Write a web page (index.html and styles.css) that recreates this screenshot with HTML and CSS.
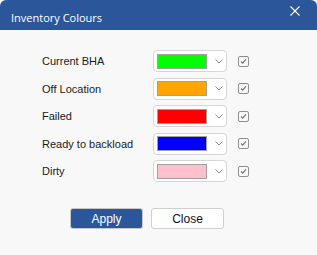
FILE: index.html
```html
<!DOCTYPE html>
<html lang="en">
<head>
  <meta charset="UTF-8">
  <meta name="viewport" content="width=device-width, initial-scale=1.0">
  <title>Inventory Colours</title>
  <link rel="stylesheet" href="styles.css">
</head>
<body>
  <div class="dialog">
    <div class="title-bar">
      <span class="title">Inventory Colours</span>
      <svg class="close-icon" viewBox="0 0 10 10" fill="none" stroke="currentColor" stroke-width="1.1">
        <path d="M0.5 0.5L9.5 9.5" />
        <path d="M9.5 0.5L0.5 9.5" />
      </svg>
    </div>

    <div class="content">
      <div class="rows">
        <div class="row">
          <span class="label">Current BHA</span>
          <div class="colour-select">
            <span class="swatch swatch-green"></span>
            <svg class="chevron" viewBox="0 0 8 5" fill="none" stroke="currentColor" stroke-width="1"><path d="M0.5 0.5L4 4L7.5 0.5" /></svg>
          </div>
          <span class="check"><svg viewBox="0 0 11 11" fill="none" stroke="currentColor" stroke-width="1.3"><path d="M2.5 5.5L4.5 7.5L8.5 3" /></svg></span>
        </div>
        <div class="row">
          <span class="label">Off Location</span>
          <div class="colour-select">
            <span class="swatch swatch-orange"></span>
            <svg class="chevron" viewBox="0 0 8 5" fill="none" stroke="currentColor" stroke-width="1"><path d="M0.5 0.5L4 4L7.5 0.5" /></svg>
          </div>
          <span class="check"><svg viewBox="0 0 11 11" fill="none" stroke="currentColor" stroke-width="1.3"><path d="M2.5 5.5L4.5 7.5L8.5 3" /></svg></span>
        </div>
        <div class="row">
          <span class="label">Failed</span>
          <div class="colour-select">
            <span class="swatch swatch-red"></span>
            <svg class="chevron" viewBox="0 0 8 5" fill="none" stroke="currentColor" stroke-width="1"><path d="M0.5 0.5L4 4L7.5 0.5" /></svg>
          </div>
          <span class="check"><svg viewBox="0 0 11 11" fill="none" stroke="currentColor" stroke-width="1.3"><path d="M2.5 5.5L4.5 7.5L8.5 3" /></svg></span>
        </div>
        <div class="row">
          <span class="label">Ready to backload</span>
          <div class="colour-select">
            <span class="swatch swatch-blue"></span>
            <svg class="chevron" viewBox="0 0 8 5" fill="none" stroke="currentColor" stroke-width="1"><path d="M0.5 0.5L4 4L7.5 0.5" /></svg>
          </div>
          <span class="check"><svg viewBox="0 0 11 11" fill="none" stroke="currentColor" stroke-width="1.3"><path d="M2.5 5.5L4.5 7.5L8.5 3" /></svg></span>
        </div>
        <div class="row">
          <span class="label">Dirty</span>
          <div class="colour-select">
            <span class="swatch swatch-pink"></span>
            <svg class="chevron" viewBox="0 0 8 5" fill="none" stroke="currentColor" stroke-width="1"><path d="M0.5 0.5L4 4L7.5 0.5" /></svg>
          </div>
          <span class="check"><svg viewBox="0 0 11 11" fill="none" stroke="currentColor" stroke-width="1.3"><path d="M2.5 5.5L4.5 7.5L8.5 3" /></svg></span>
        </div>
      </div>

      <div class="buttons">
        <button class="btn btn-primary">Apply</button>
        <button class="btn">Close</button>
      </div>
    </div>
  </div>
</body>
</html>
```

FILE: styles.css
```css
:root {
	--title-blue: #2b579a;
	--panel-bg: #f8f8f8;
	--border-light: #d6d6d6;
}

body {
	margin: 0;
	background: #ffffff;
	font-family: "Liberation Sans", Arial, sans-serif;
}

.dialog {
	width: 317px;
	height: 255px;
	background: var(--panel-bg);
	border-radius: 6px 6px 0 0;
	overflow: hidden;
	display: flex;
	flex-direction: column;
}

.title-bar {
	height: 30px;
	background: var(--title-blue);
	color: #ffffff;
	display: flex;
	align-items: center;
	justify-content: space-between;
	padding: 0 17px 0 11px;
}

.title {
	font-family: "Open Sans", sans-serif;
	font-size: 11px;
	padding-top: 5px;
}

.close-icon {
	width: 10px;
	height: 10px;
	margin-top: -8px;
}

.content {
	padding: 20px 0 0 42px;
}

.rows {
	display: flex;
	flex-direction: column;
	gap: 5.5px;
}

.row {
	display: flex;
	align-items: center;
	height: 22px;
}

.label {
	width: 111px;
	font-size: 11px;
	color: #1a1a1a;
}

.colour-select {
	box-sizing: border-box;
	width: 74px;
	height: 22px;
	background: #ffffff;
	border: 1px solid var(--border-light);
	border-radius: 4px;
	display: flex;
	align-items: center;
	padding-left: 3px;
}

.swatch {
	box-sizing: border-box;
	width: 50px;
	height: 15px;
	border: 1px solid #a0a0a0;
}

.swatch-green { background: #00ff00; }
.swatch-orange { background: #ffa500; }
.swatch-red { background: #ff0000; }
.swatch-blue { background: #0000ff; }
.swatch-pink { background: #ffc0cb; }

.chevron {
	width: 8px;
	height: 5px;
	margin-left: 8px;
	color: #8c8c8c;
}

.check {
	box-sizing: border-box;
	width: 11px;
	height: 11px;
	margin-left: 11px;
	border: 1px solid #8f8f8f;
	border-radius: 2px;
	color: #6e6e6e;
	display: flex;
}

.check svg {
	width: 9px;
	height: 9px;
}

.buttons {
	display: flex;
	gap: 8px;
	margin: 26px 0 0 28px;
}

.btn {
	box-sizing: border-box;
	width: 73px;
	height: 21px;
	font-family: "Liberation Sans", Arial, sans-serif;
	font-size: 12px;
	color: #111111;
	background: #ffffff;
	border: 1px solid #cfcfcf;
	border-radius: 3px;
	padding: 0;
}

.btn-primary {
	background: var(--title-blue);
	color: #ffffff;
	border-color: #c8c8c8;
}
```
